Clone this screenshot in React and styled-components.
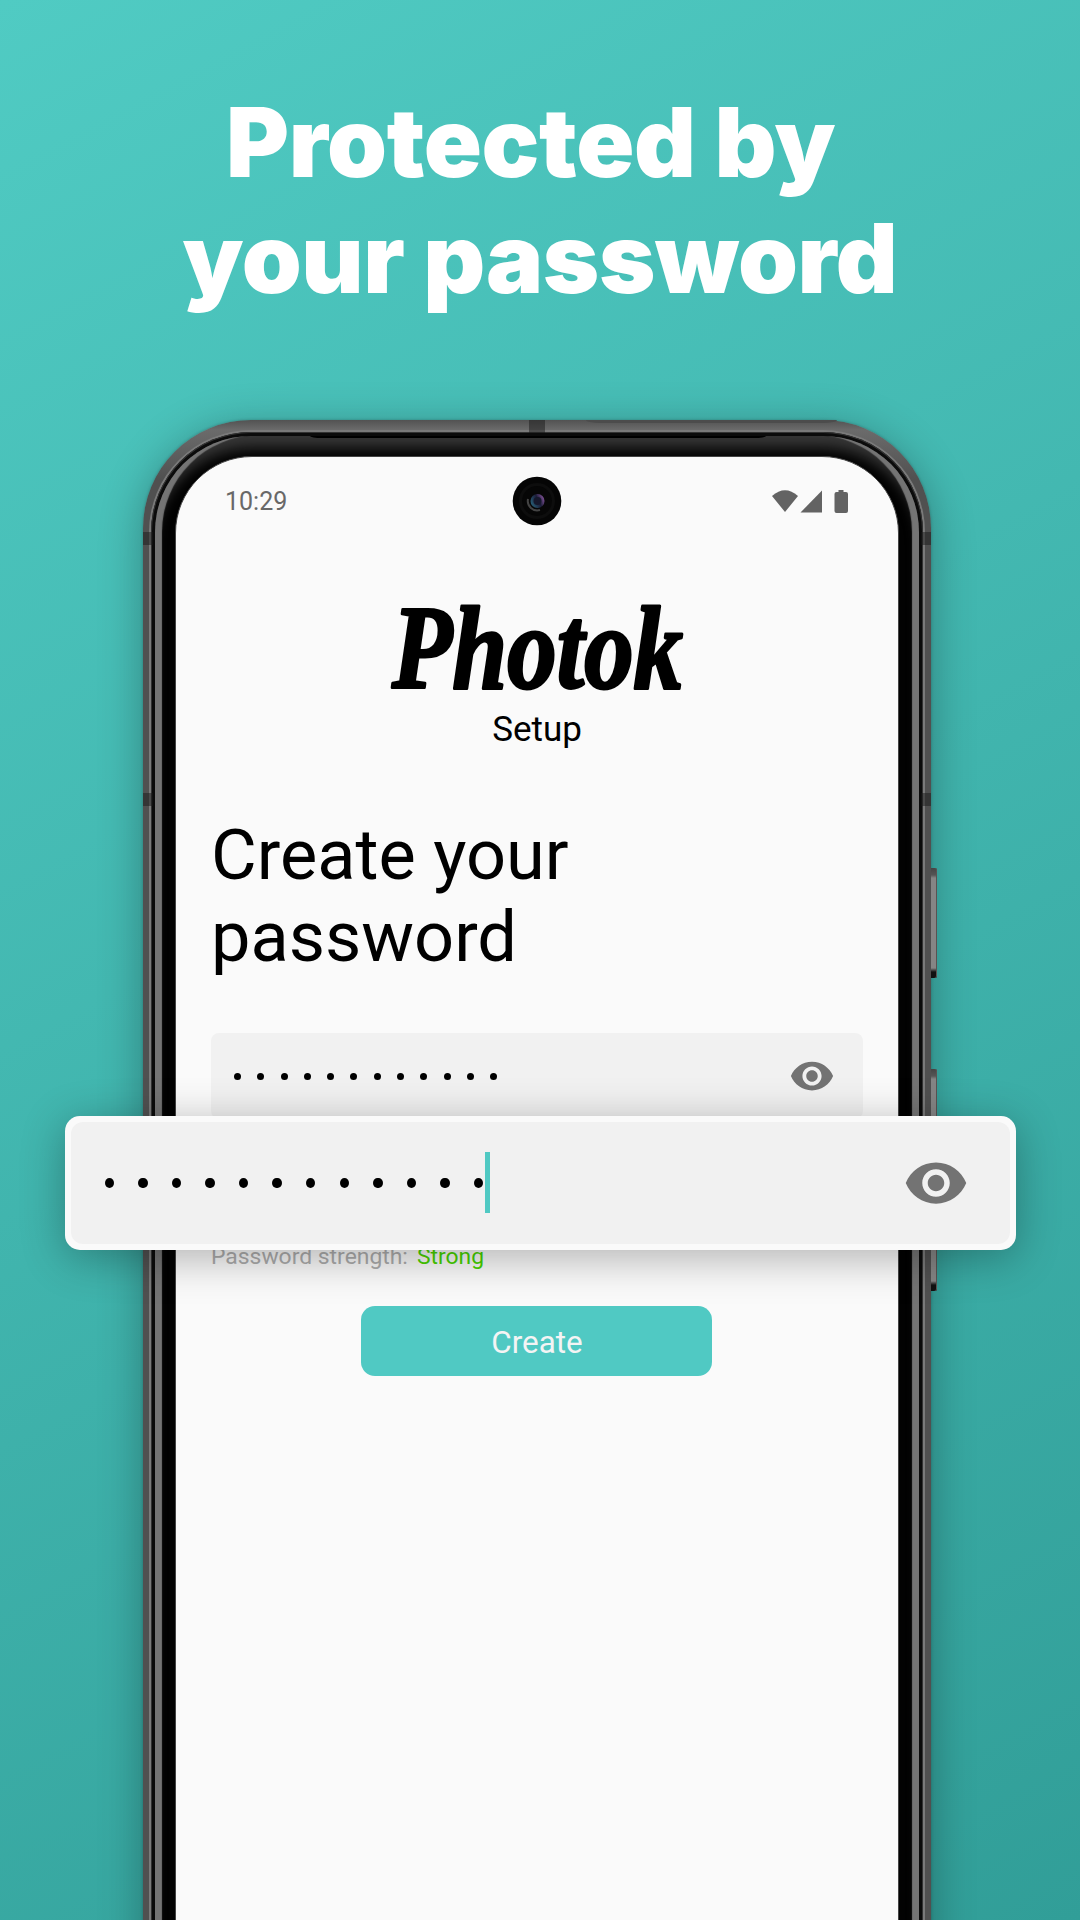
import React from 'react';
import styled, { createGlobalStyle } from 'styled-components';

const Global = createGlobalStyle`
  * { box-sizing: border-box; }
  html, body { margin: 0; padding: 0; }
  body { width: 1080px; height: 1920px; overflow: hidden; }
`;

const Page = styled.main`
  position: relative;
  width: 1080px;
  height: 1920px;
  overflow: hidden;
  display: flex;
  flex-direction: column;
  background: linear-gradient(152deg, #50cbc3 0%, #319e98 100%);
  font-family: Roboto, sans-serif;
`;

const Headline = styled.h1`
  flex: none;
  margin: 0;
  height: 420px;
  padding-top: 84px;
  text-align: center;
  white-space: pre;
  color: #fff;
  font: 900 96px/116px Inter, sans-serif;
  letter-spacing: -0.35px;
`;

const Phone = styled.section`
  position: relative;
  flex: none;
  width: 788px;
  height: 1720px;
  margin-left: 143px;
  padding: 10px 6px;
  border-radius: 108px;
  background: linear-gradient(180deg, #525252 0, #6b6b6b 10px, #505050 60px);
  box-shadow: 0 0 3px rgba(0, 0, 0, 0.25), 0 8px 44px rgba(0, 0, 0, 0.3);
`;

const Highlight = styled.div`
  height: 100%;
  padding: 2px 2px;
  border-radius: 102px;
  background: #7a7a7a;
`;

const Groove = styled.div`
  height: 100%;
  padding: 4px 4px;
  border-radius: 100px;
  background: #0b0b0b;
  box-shadow: inset 0 0 0 1px #333;
`;

const Bezel = styled.div`
  position: relative;
  height: 100%;
  padding: 20px 20px;
  border-radius: 96px;
  background: #020202;
  box-shadow: inset 8px 0 1px -1px #747474, inset -8px 0 1px -1px #747474,
    inset 0 14px 14px -2px #363636;
`;

const Earpiece = styled.i`
  position: absolute;
  left: 155px;
  top: 0;
  width: 456px;
  height: 2px;
  border-radius: 0 0 12px 12px / 0 0 2px 2px;
  background: #000;
`;

const Screen = styled.div`
  height: 100%;
  border-radius: 77px;
  overflow: hidden;
  background: #fafafa;
  border: 1px solid #444;
  display: flex;
  flex-direction: column;
`;

const Antenna = styled.i`
  position: absolute;
  left: ${(p) => p.$x}px;
  top: ${(p) => p.$y}px;
  width: ${(p) => p.$w}px;
  height: ${(p) => p.$h}px;
  background: rgba(25, 25, 25, 0.5);
`;

const TopSeam = styled.i`
  position: absolute;
  left: 443px;
  top: 0;
  width: 251px;
  height: 3px;
  border-radius: 0 0 14px 14px / 0 0 3px 3px;
  background: #4c4c4c;
`;

const SideKey = styled.i`
  position: absolute;
  left: 788px;
  top: ${(p) => p.$y}px;
  width: 6px;
  height: ${(p) => p.$h}px;
  border-radius: 0 2px 2px 0;
  background: linear-gradient(180deg, #444 0, #555 7px, #858585 10px, #858585 calc(100% - 10px), #111 calc(100% - 6px), #111 100%);
  box-shadow: inset -1px 0 0 #5a5252;
`;

const StatusBar = styled.header`
  position: relative;
  height: 87px;
  padding: 0 49px;
  display: flex;
  align-items: center;
  justify-content: space-between;
`;

const Clock = styled.time`
  padding-top: 2px;
  color: #686868;
  font-size: 25px;
  line-height: 30px;
`;

const StatusIcons = styled.svg`
  width: 78px;
  height: 26px;
  fill: #636363;
`;

const Camera = styled.svg`
  position: absolute;
  left: 335.5px;
  top: 18.5px;
  width: 50px;
  height: 50px;
`;

const Brand = styled.div`
  height: 84px;
  margin-top: 62px;
  text-align: center;
`;

const Wordmark = styled.svg`
  width: 300px;
  height: 90px;
  overflow: visible;
  stroke: #000;
  stroke-width: 3px;
  stroke-linejoin: round;
  font: italic 900 119px 'Liberation Serif', serif;
`;

const Subtitle = styled.p`
  margin: 19px 0 0;
  text-align: center;
  color: #000;
  font-size: 35px;
  line-height: 42px;
`;

const Form = styled.div`
  padding: 0 35px;
  display: flex;
  flex-direction: column;
`;

const Title = styled.h2`
  margin: 63px 0 0;
  font-size: 70.3px;
  line-height: 82px;
  font-weight: 400;
  color: #000;
`;

const Field = styled.div`
  height: 86px;
  margin-top: 55px;
  padding: 0 28px 0 23px;
  border-radius: 8px;
  background: #f1f1f1;
  display: flex;
  align-items: center;
  justify-content: space-between;
`;

const Dots = styled.div`
  display: flex;
  align-items: center;
  gap: ${(p) => p.$gap}px;
`;

const Dot = styled.span`
  width: ${(p) => p.$w}px;
  height: ${(p) => p.$h}px;
  border-radius: 50%;
  background: #000;
`;

const Eye = styled.svg`
  width: ${(p) => p.$size}px;
  height: ${(p) => p.$size}px;
  fill: #737373;
`;

const Strength = styled.p`
  margin: 124px 0 0;
  display: flex;
  gap: 9px;
  font-size: 22.9px;
  line-height: 28px;
  color: #adadad;
`;

const Level = styled.span`
  color: #48d400;
`;

const CreateButton = styled.button`
  width: 351px;
  height: 70px;
  margin: 35px 0 0 150px;
  padding: 2px 0 0 1px;
  border: 0;
  border-radius: 14px;
  background: #50c9c3;
  color: #f4f4f4;
  font: 400 31.4px/70px Roboto, sans-serif;
`;

const Magnifier = styled.div`
  position: absolute;
  left: 65px;
  top: 1116px;
  width: 951px;
  height: 134px;
  padding: 6px;
  border-radius: 15px;
  background: #fafafa;
  box-shadow: 0 8px 44px rgba(0, 0, 0, 0.3);
`;

const MagnifiedField = styled.div`
  height: 100%;
  padding: 0 41px 0 33.5px;
  border-radius: 12px;
  background: #f1f1f1;
  display: flex;
  align-items: center;
  justify-content: space-between;
`;

const Entry = styled.div`
  display: flex;
  align-items: center;
`;

const Caret = styled.span`
  width: 5.5px;
  height: 61px;
  margin: -1px 0 0 1.5px;
  background: #50c9c3;
`;

const EyeIcon = ({ size }) => (
  <Eye $size={size} viewBox="0 0 24 24">
    <path d="M12 4.5C7 4.5 2.73 7.61 1 12c1.73 4.39 6 7.5 11 7.5s9.27-3.11 11-7.5c-1.73-4.39-6-7.5-11-7.5zM12 17c-2.76 0-5-2.24-5-5s2.24-5 5-5 5 2.24 5 5-2.24 5-5 5zm0-8c-1.66 0-3 1.34-3 3s1.34 3 3 3 3-1.34 3-3-1.34-3-3-3z" />
  </Eye>
);

const PasswordDots = ({ gap, w, h }) => (
  <Dots $gap={gap}>
    {Array.from({ length: 12 }, (_, i) => (
      <Dot key={i} $w={w} $h={h} />
    ))}
  </Dots>
);

export default function App() {
  return (
    <Page>
      <Global />
      <Headline>{'Protected by \nyour password'}</Headline>
      <Phone>
        <Highlight>
          <Groove>
            <Bezel>
              <Earpiece />
              <Screen>
                <StatusBar>
                  <Clock>10:29</Clock>
                  <Camera viewBox="0 0 50 50">
                    <defs>
                      <linearGradient id="lens" x1="0" x2="1" y1="0.7" y2="0.2">
                        <stop offset="0" stopColor="#286078" />
                        <stop offset="0.55" stopColor="#1c1c38" />
                        <stop offset="1" stopColor="#8f5aa5" />
                      </linearGradient>
                    </defs>
                    <circle cx="25" cy="25" r="24.3" fill="#050505" />
                    <circle cx="25" cy="25" r="18" fill="#0d0d0d" />
                    <circle cx="25" cy="25" r="15" fill="#060606" />
                    <path d="M16 23 A9.5 9.5 0 0 0 28 34" fill="none" stroke="#444" strokeWidth="2" />
                    <circle cx="25.5" cy="25" r="7" fill="url(#lens)" />
                    <circle cx="25.5" cy="25" r="4" fill="#16182c" />
                  </Camera>
                  <StatusIcons viewBox="0 0 78 26">
                    <path d="M1 8 Q14 -3.5 27 8 L14 24 Z" />
                    <path d="M51 2.5 V24.5 H29.5 Z" />
                    <path d="M67.5 2 h5 v2 h2.5 a2 2 0 0 1 2 2 v17 a2 2 0 0 1 -2 2 h-9.500 a2 2 0 0 1 -2 -2 v-17 a2 2 0 0 1 2 -2 h2 z" />
                  </StatusIcons>
                </StatusBar>
                <Brand>
                  <Wordmark viewBox="0 0 300 90">
                    <text x="5" y="81.500" textLength="291" lengthAdjust="spacingAndGlyphs">Photok</text>
                  </Wordmark>
                </Brand>
                <Subtitle>Setup</Subtitle>
                <Form>
                  <Title>Create your<br />password</Title>
                  <Field>
                    <PasswordDots gap={16.3} w={7} h={7} />
                    <EyeIcon size={46} />
                  </Field>
                  <Strength>
                    <span>Password strength:</span>
                    <Level>Strong</Level>
                  </Strength>
                  <CreateButton>Create</CreateButton>
                </Form>
              </Screen>
            </Bezel>
          </Groove>
        </Highlight>
        <TopSeam />
        <Antenna $x={386} $y={0} $w={16} $h={13} />
        <Antenna $x={0} $y={112} $w={10} $h={13} />
        <Antenna $x={778} $y={112} $w={10} $h={13} />
        <Antenna $x={0} $y={373} $w={10} $h={13} />
        <Antenna $x={778} $y={373} $w={10} $h={13} />
        <SideKey $y={448} $h={110} />
        <SideKey $y={649} $h={222} />
      </Phone>
      <Magnifier>
        <MagnifiedField>
          <Entry>
            <PasswordDots gap={24.08} w={9.5} h={10.5} />
            <Caret />
          </Entry>
          <EyeIcon size={66} />
        </MagnifiedField>
      </Magnifier>
    </Page>
  );
}
